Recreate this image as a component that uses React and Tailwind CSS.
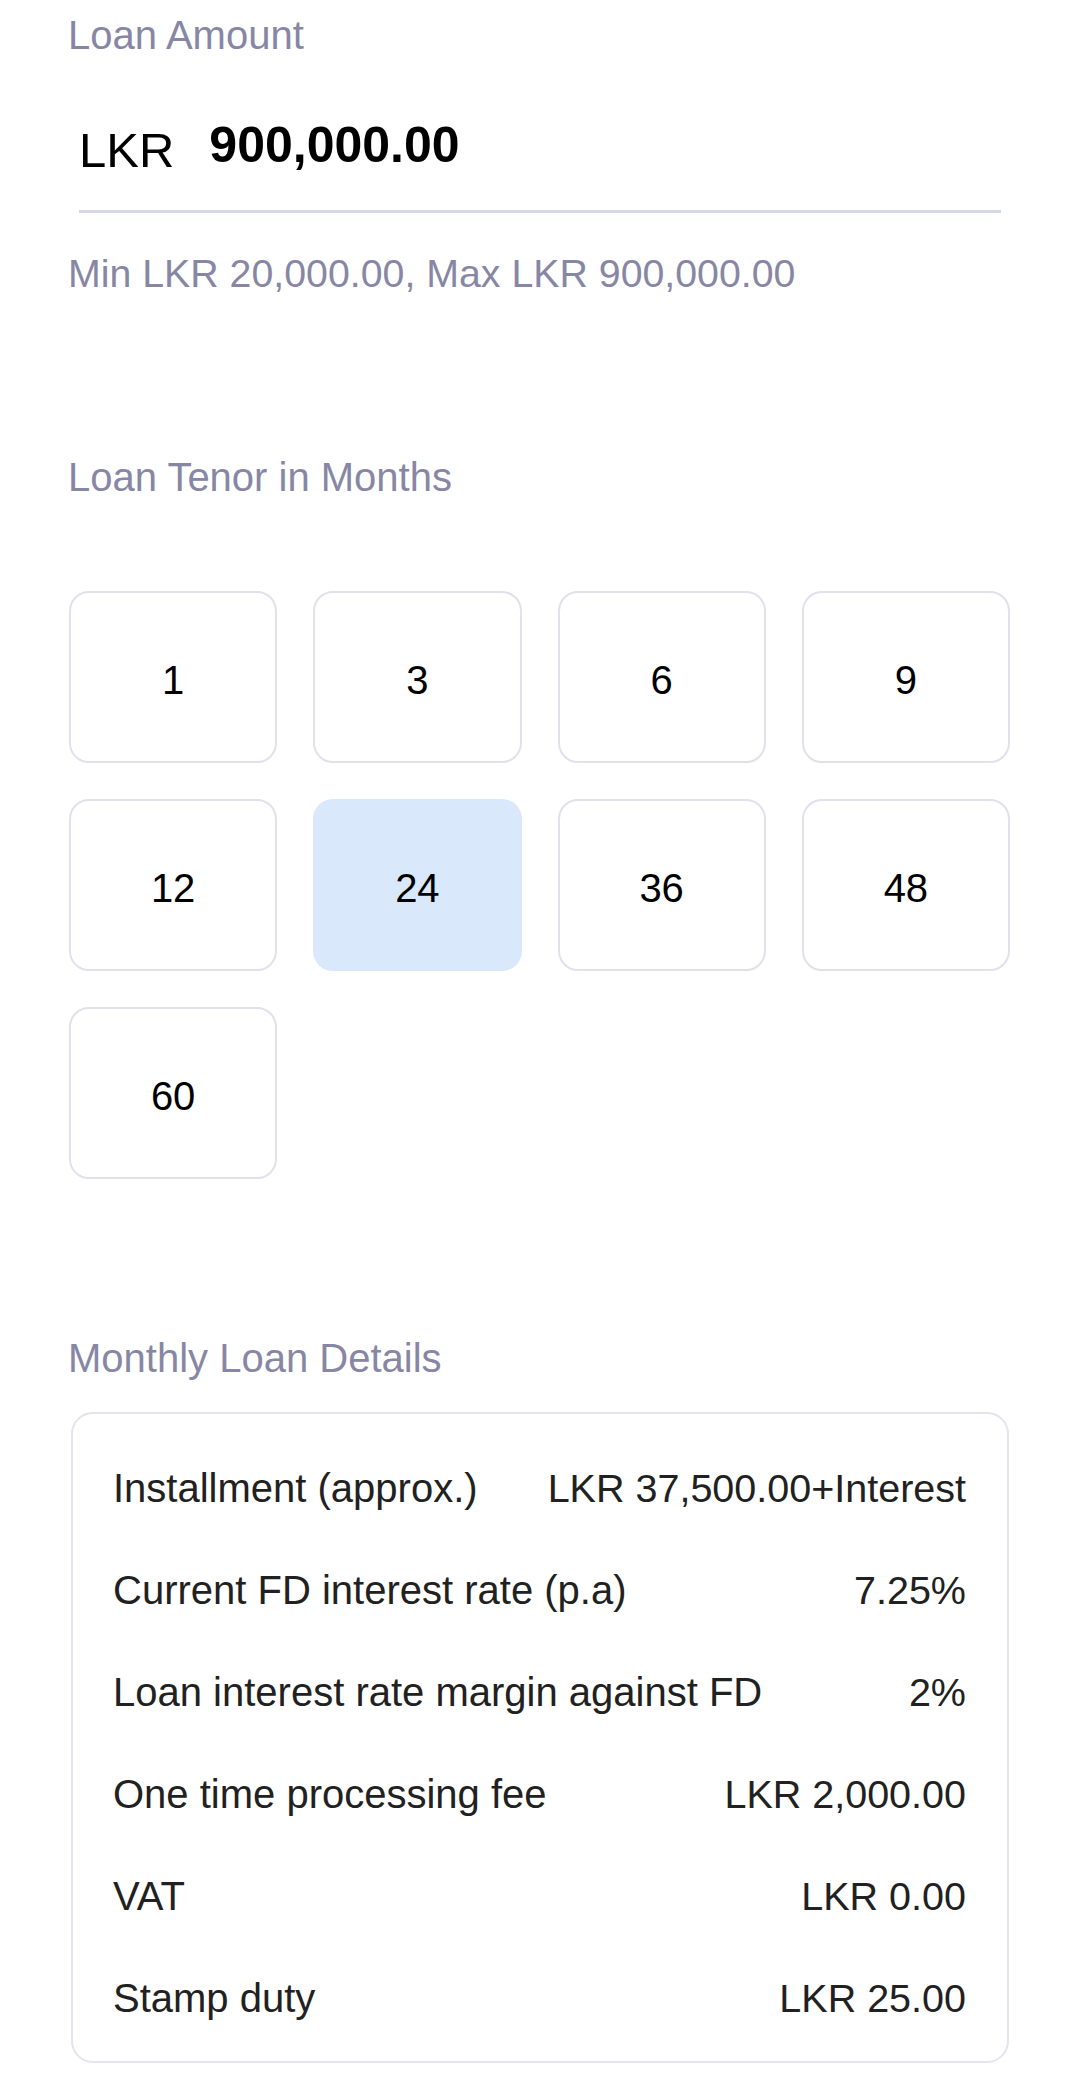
export default function App() {
  const tenors = [1, 3, 6, 9, 12, 24, 36, 48, 60];
  const selected = 24;
  const rows = [
    ["Installment (approx.)", "LKR 37,500.00+Interest"],
    ["Current FD interest rate (p.a)", "7.25%"],
    ["Loan interest rate margin against FD", "2%"],
    ["One time processing fee", "LKR 2,000.00"],
    ["VAT", "LKR 0.00"],
    ["Stamp duty", "LKR 25.00"],
  ];
  return (
    <div
      className="w-[1080px] min-h-[2099px] bg-white pl-[68px] pr-[70px] pt-[12px]"
      style={{ fontFamily: '"Liberation Sans", Arial, sans-serif' }}
    >
      <div className="text-[40px] leading-[46px] text-[#8787a5]">Loan Amount</div>

      <div className="mt-[62px] ml-[11px] mr-[9px] flex items-end gap-[35px] border-b-[3px] border-[#d7d8e5] pb-[36px]">
        <span className="text-[49px] leading-[48px] text-black">LKR</span>
        <span className="mb-[4px] text-[50px] font-bold leading-[50px] text-black">900,000.00</span>
      </div>

      <div className="mt-[37px] text-[39.3px] leading-[46px] text-[#8787a5]">
        Min LKR 20,000.00, Max LKR 900,000.00
      </div>

      <div className="mt-[158px] text-[40px] leading-[46px] text-[#8787a5]">Loan Tenor in Months</div>

      <div className="mt-[91px] ml-[1px] grid grid-cols-4 gap-[36px]">
        {tenors.map((t) =>
          t === selected ? (
            <div
              key={t}
              className="flex h-[172px] items-center justify-center rounded-[20px] bg-[#d9e9fb] pt-[6px] text-[40px] leading-[46px] text-black"
            >
              {t}
            </div>
          ) : (
            <div
              key={t}
              className="flex h-[172px] items-center justify-center rounded-[20px] border-2 border-[#e0e1eb] bg-white pt-[6px] text-[40px] leading-[46px] text-black"
            >
              {t}
            </div>
          )
        )}
      </div>

      <div className="mt-[156px] text-[40px] leading-[46px] text-[#8787a5]">Monthly Loan Details</div>

      <div className="mt-[31px] ml-[3px] mr-[1px] flex flex-col gap-[56px] rounded-[22px] border-2 border-[#e3e4ee] pl-[40px] pr-[41px] pt-[51px] pb-[40px]">
        {rows.map(([k, v]) => (
          <div key={k} className="flex items-center justify-between leading-[46px] text-[#212121]">
            <span className="text-[40px]">{k}</span>
            <span className="text-[39.5px]">{v}</span>
          </div>
        ))}
      </div>
    </div>
  );
}
